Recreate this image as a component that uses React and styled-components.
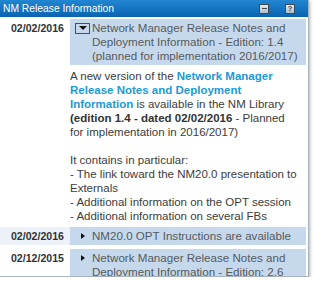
import React from "react";
import styled, { createGlobalStyle } from "styled-components";

const Global = createGlobalStyle`
  html, body { margin: 0; padding: 0; background: #fff; overflow: hidden; }
  body { font-family: "Liberation Sans", Arial, sans-serif; }
`;

const Panel = styled.div`
  width: 308px;
  height: 276px;
  border-right: 1px solid #aab4be;
  border-bottom: 1px solid #aab4be;
  box-shadow: 1px 1px 3px rgba(0, 0, 0, 0.3);
  background: #fff;
  overflow: hidden;
  display: flex;
  flex-direction: column;
`;

const Header = styled.div`
  height: 17px;
  flex: none;
  display: flex;
  align-items: center;
  padding: 0 13px 0 3px;
  background: linear-gradient(#2286d2, #0a64b0);
`;

const HeaderTitle = styled.div`
  color: #fff;
  font-size: 10.3px;
  line-height: 17px;
  white-space: nowrap;
`;

const HeaderTools = styled.div`
  margin-left: auto;
  display: flex;
  gap: 16px;
  align-items: center;
`;

const ToolButton = styled.div`
  box-sizing: border-box;
  width: 10px;
  height: 10px;
  border: 1px solid #3d4a57;
  background: linear-gradient(#e6eaee, #b4bcc4);
  display: flex;
  align-items: center;
  justify-content: center;
  color: #3d4a57;
  font-size: 8px;
  font-weight: bold;
  line-height: 8px;
`;

const MinusBar = styled.span`
  display: block;
  width: 5px;
  height: 1px;
  background: #3d4a57;
`;

const List = styled.div`
  display: flex;
  flex-direction: column;
  gap: 4px;
  padding: 2px 2px 0 0;
`;

const Row = styled.div`
  display: grid;
  grid-template-columns: 70px 1fr;
  background: ${(p) => (p.$hover ? "#edf2f8" : "transparent")};
`;

const DateCell = styled.div`
  text-align: right;
  padding: 2px 6px 0 0;
  font-size: 10.6px;
  line-height: 14px;
  font-weight: bold;
  color: #333;
  white-space: nowrap;
`;

const Content = styled.div`
  display: flex;
  flex-direction: column;
  min-width: 0;
`;

const TitleBar = styled.div`
  display: flex;
  align-items: flex-start;
  background: #c6d9ec;
  padding: 2px 4px 2px 5px;
`;

const Toggle = styled.div`
  box-sizing: border-box;
  flex: none;
  width: 15px;
  height: 11px;
  margin-top: 1.5px;
  border: 1px solid ${(p) => (p.$focused ? "#e01010" : "transparent")};
  display: flex;
  align-items: center;
  justify-content: center;
`;

const Triangle = styled.span`
  width: 0;
  height: 0;
  ${(p) =>
    p.$open
      ? `border-left: 4px solid transparent;
         border-right: 4px solid transparent;
         border-top: 4px solid #111;`
      : `border-top: 3.5px solid transparent;
         border-bottom: 3.5px solid transparent;
         border-left: 4px solid #111;`}
`;

const TitleText = styled.div`
  margin-left: 2px;
  font-size: 11.6px;
  line-height: 14px;
  color: #555a5f;
`;

const Body = styled.div`
  padding: 4px 6px 0 0;
  font-size: 11.5px;
  line-height: 14px;
  color: #3c3c3c;
`;

const LinkText = styled.span`
  font-weight: bold;
  color: #1b9ad8;
`;

const Strong = styled.span`
  font-weight: bold;
  color: #333;
`;

function Entry({ date, title, open, focused, hover, children }) {
  return (
    <Row $hover={hover}>
      <DateCell>{date}</DateCell>
      <Content>
        <TitleBar>
          <Toggle $focused={focused}>
            <Triangle $open={open} />
          </Toggle>
          <TitleText>{title}</TitleText>
        </TitleBar>
        {open && <Body>{children}</Body>}
      </Content>
    </Row>
  );
}

export default function App() {
  return (
    <>
      <Global />
      <Panel>
        <Header>
          <HeaderTitle>NM Release Information</HeaderTitle>
          <HeaderTools>
            <ToolButton>
              <MinusBar />
            </ToolButton>
            <ToolButton>?</ToolButton>
          </HeaderTools>
        </Header>
        <List>
          <Entry
            date="02/02/2016"
            open
            focused
            title="Network Manager Release Notes and Deployment Information - Edition: 1.4 (planned for implementation 2016/2017)"
          >
            A new version of the{" "}
            <LinkText>Network Manager Release Notes and Deployment Information</LinkText>{" "}
            is available in the NM Library <Strong>(edition 1.4 - dated 02/02/2016</Strong> -
            Planned for implementation in 2016/2017)
            <br />
            <br />
            It contains in particular:
            <br />- The link toward the NM20.0 presentation to Externals
            <br />- Additional information on the OPT session
            <br />- Additional information on several FBs
          </Entry>
          <Entry date="02/02/2016" hover title="NM20.0 OPT Instructions are available" />
          <Entry
            date="02/12/2015"
            title="Network Manager Release Notes and Deployment Information - Edition: 2.6"
          />
        </List>
      </Panel>
    </>
  );
}
